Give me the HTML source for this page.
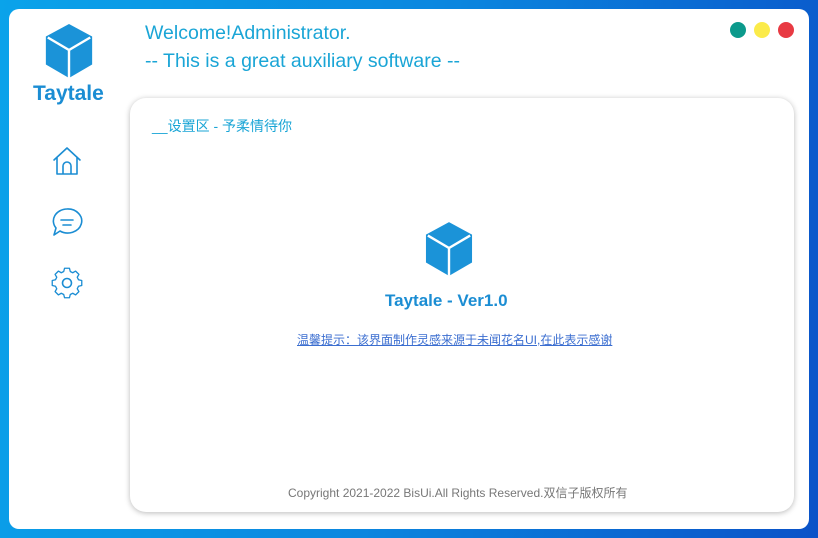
<!DOCTYPE html>
<html><head><meta charset="utf-8"><style>
html,body{margin:0;padding:0;width:818px;height:538px;overflow:hidden}
body{background:linear-gradient(100deg,#0aa3ea 0%,#0b86df 50%,#0a52c8 100%);position:relative;font-family:"Liberation Sans","Noto Sans CJK SC",sans-serif}
.win{position:absolute;left:9px;top:9px;width:800px;height:520px;background:#fff;border-radius:10px}
.t{position:absolute;color:#1aa5d6;font-size:19px;white-space:nowrap}
.card{position:absolute;left:130px;top:98px;width:664px;height:414px;background:#fff;border-radius:16px;box-shadow:0 1px 6px rgba(0,0,0,.28)}
.dot{position:absolute;top:22px;width:16px;height:16px;border-radius:50%}
</style></head><body>
<div class="win"></div>
<svg style="position:absolute;left:44px;top:24px" width="50" height="54" viewBox="0 0 50 56">
<polygon points="25,0 49,13 49,42 25,56 1,42 1,13" fill="#1b93d8"/>
<polyline points="3,14 25,27 47,14" fill="none" stroke="#fff" stroke-width="2.5"/>
<line x1="25" y1="27" x2="25" y2="56" stroke="#fff" stroke-width="2.5"/>
</svg>
<div class="t" style="left:33px;top:82px;font-size:21px;font-weight:bold;color:#1b8dd3">Taytale</div>
<div class="t" style="left:145px;top:22px;font-size:19.5px">Welcome!Administrator.</div>
<div class="t" style="left:145px;top:50px;font-size:19.5px">-- This is a great auxiliary software --</div>
<div class="dot" style="left:730px;background:#0c9a8c"></div>
<div class="dot" style="left:754px;background:#fbeb4a"></div>
<div class="dot" style="left:778px;background:#e83a43"></div>
<svg style="position:absolute;left:50px;top:145px" width="34" height="160" viewBox="0 0 34 160" fill="none" stroke="#1b8dd3" stroke-width="1.6" stroke-linejoin="round" stroke-linecap="round">
<path d="M4 15 L17 3 L30 15 M7 12 V29 H27 V12 M13 29 V21 a4 4 0 0 1 8 0 V29"/>
<path d="M17 64 a14 12 0 1 1 -7 22 l-6 4 l2 -7 a14 12 0 0 1 11 -19 z M11 75 H23 M13 80 H21"/>
<path d="M14 120 h6 l1 4 l3 1.5 l3.5 -2 l4 4 l-2 3.5 l1.5 3 l4 1 v6 l-4 1 l-1.5 3 l2 3.5 l-4 4 l-3.5 -2 l-3 1.5 l-1 4 h-6 l-1 -4 l-3 -1.5 l-3.5 2 l-4 -4 l2 -3.5 l-1.5 -3 l-4 -1 v-6 l4 -1 l1.5 -3 l-2 -3.5 l4 -4 l3.5 2 l3 -1.5 z" transform="translate(17 138) scale(0.82) translate(-17 -138)"/>
<circle cx="17" cy="138" r="4.5"/>
</svg>
<div class="card"></div>
<div class="t" style="left:152px;top:116px;font-size:14px">__设置区 - 予柔情待你</div>
<svg style="position:absolute;left:425px;top:222px" width="48" height="54" viewBox="0 0 50 56">
<polygon points="25,0 49,13 49,42 25,56 1,42 1,13" fill="#1b93d8"/>
<polyline points="3,14 25,27 47,14" fill="none" stroke="#fff" stroke-width="2.5"/>
<line x1="25" y1="27" x2="25" y2="56" stroke="#fff" stroke-width="2.5"/>
</svg>
<div class="t" style="left:385px;top:291px;font-size:17px;font-weight:bold;color:#1b8dd3">Taytale - Ver1.0</div>
<div class="t" style="left:297px;top:331px;font-size:12px;color:#3b6ed0;text-decoration:underline">温馨提示：该界面制作灵感来源于未闻花名UI,在此表示感谢</div>
<div class="t" style="left:288px;top:484px;font-size:12px;color:#777">Copyright 2021-2022 BisUi.All Rights Reserved.双信子版权所有</div>
</body></html>
